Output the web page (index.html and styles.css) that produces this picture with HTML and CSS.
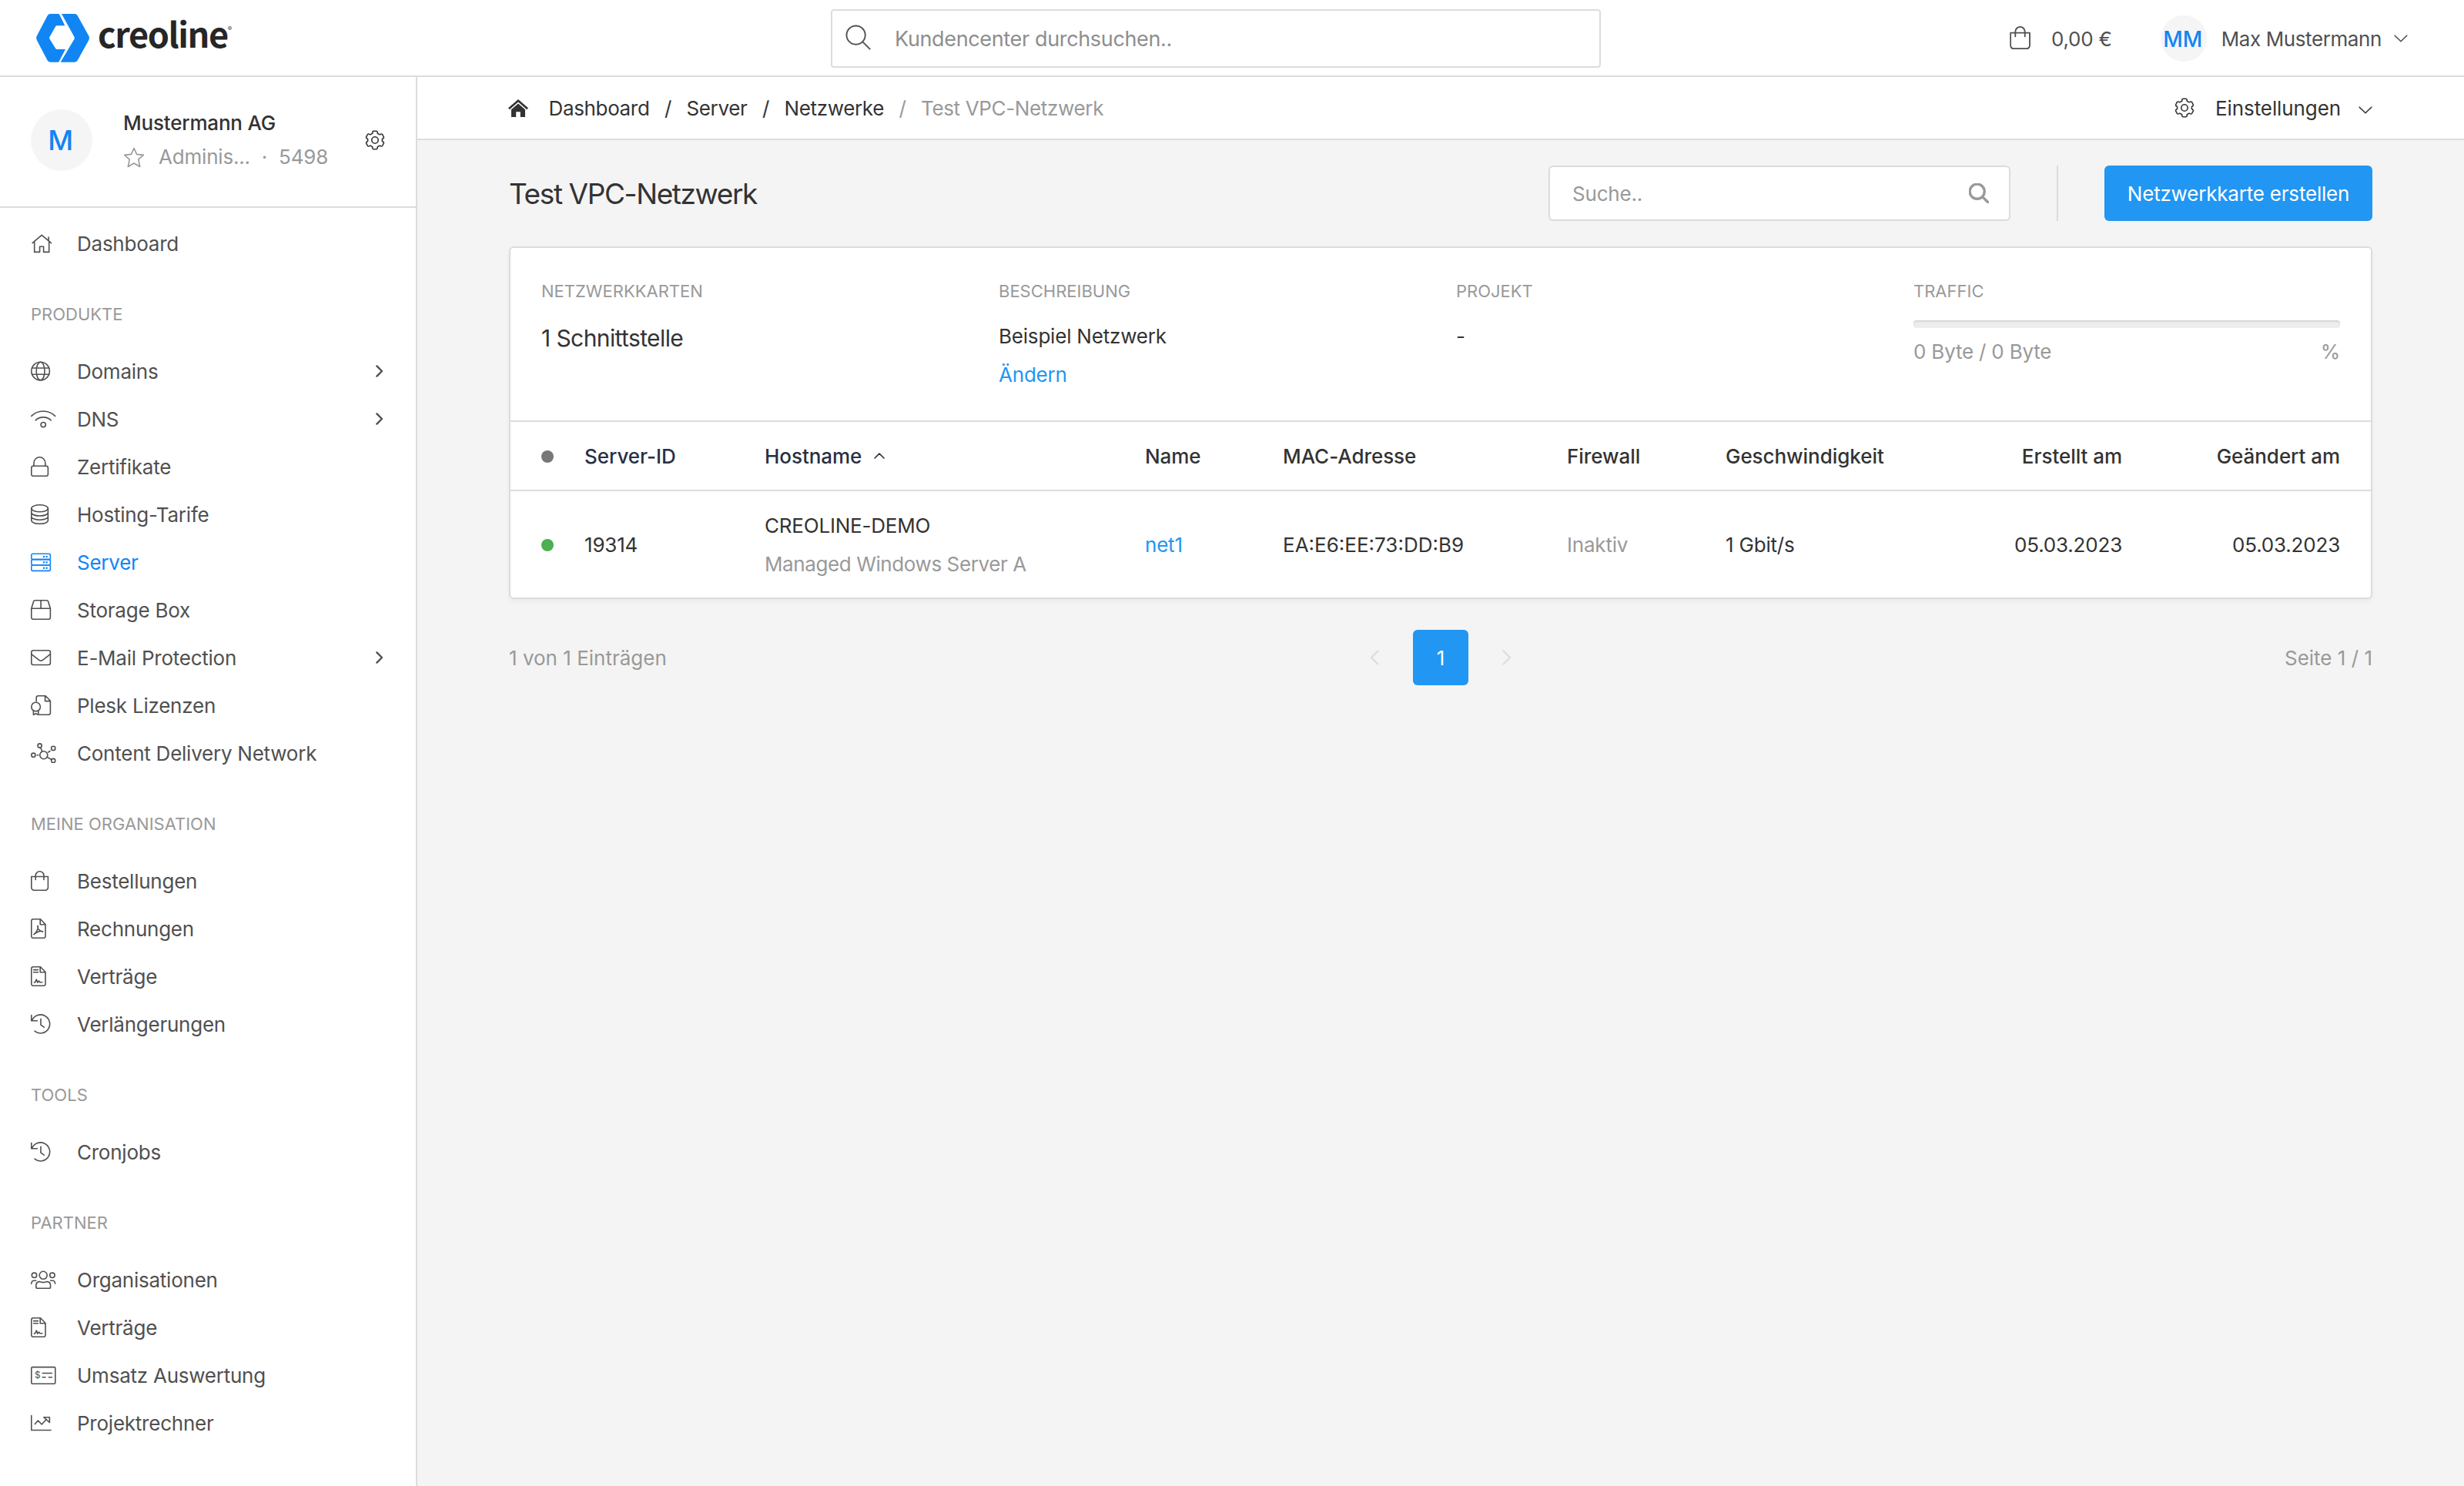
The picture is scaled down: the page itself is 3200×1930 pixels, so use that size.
FILE: index.html
```html
<!DOCTYPE html>
<html lang="de">
<head>
  <meta charset="UTF-8">
  <meta name="viewport" content="width=device-width, initial-scale=1.0">
  <title>Test VPC-Netzwerk - creoline Kundencenter</title>
  <link rel="stylesheet" href="styles.css">
</head>
<body>
  <!-- Shared icons -->
  <svg class="icon-sprite" aria-hidden="true">
    <symbol id="icon-gear" viewBox="0 0 26 26">
      <path d="M11.2 1.2h3.6q1.2 0 1.3 1.1l.2 1.9 2.9 1.7 1.7-.8q1.1-.4 1.7.6l1.7 3.1q.5 1-.4 1.7l-1.5 1.1v2.8l1.5 1.1q.9.7.4 1.7l-1.7 3.1q-.6 1-1.7.6l-1.7-.8-2.9 1.7-.2 1.9q-.1 1.1-1.3 1.1h-3.6q-1.2 0-1.3-1.1l-.2-1.9-2.9-1.7-1.7.8q-1.1.4-1.7-.6l-1.7-3.1q-.5-1 .4-1.7l1.5-1.1v-2.8l-1.5-1.1q-.9-.7-.4-1.7l1.7-3.1q.6-1 1.7-.6l1.7.8 2.9-1.7.2-1.9q.1-1.1 1.3-1.1z"/>
      <circle cx="13" cy="13" r="4.2"/>
    </symbol>
    <symbol id="icon-bag" viewBox="0 0 24 26">
      <path d="M.8 7.5h21.6v14.2a3.6 3.6 0 0 1-3.6 3.6H4.4a3.6 3.6 0 0 1-3.6-3.6z"/>
      <path d="M6.2 11.6V6.2a5.4 5.4 0 0 1 10.8 0v5.4"/>
    </symbol>
    <symbol id="icon-contract" viewBox="0 0 20 26">
      <path d="M3.2.8h9.3l6.5 6.7v15.4a2.4 2.4 0 0 1-2.4 2.4H3.2a2.4 2.4 0 0 1-2.4-2.4V3.2A2.4 2.4 0 0 1 3.2.8zM12.2 1v6.8h6.6M3.6 4.6h5.8M3.6 7.8h5.8"/>
      <path d="M4.3 21.3c1.3 0 2-1.3 2.9-4.3.9 0 .8 3 1.4 4.1.7-.5 1-2 2-2 .6 0 .4 1.7 1.3 1.7h2.9"/>
    </symbol>
    <symbol id="icon-history" viewBox="0 0 26 26">
      <path d="M.8 1.6v7.2h7.6M1.4 8.8A12 12 0 1 1 5 22.2M13 6.2v8l4.2 3"/>
    </symbol>
    <symbol id="icon-right" viewBox="0 0 10 16">
      <path d="M1.4 1.4L8 8l-6.6 6.6"/>
    </symbol>
    <symbol id="icon-down" viewBox="0 0 18 10">
      <path d="M1.2 1.2L9 8.8l7.8-7.6"/>
    </symbol>
    <symbol id="icon-search" viewBox="0 0 34 34">
      <circle cx="14" cy="14" r="12.5"/>
      <path d="M23 23l9.6 9.6"/>
    </symbol>
  </svg>

  <header class="topbar">
    <a href="#" class="logo">
      <svg class="logo-mark" viewBox="0 0 72 65">
        <path d="M19.5 1h10.3q1 0 1.4.9l7.1 14.4H28q-1.2 0-1.8 1l-7.9 14q-.5 1 0 2l7.9 12.7q.6 1 1.8 1h11L30.8 62.8q-.4.9-1.4.9h-9.9q-2.7 0-4-2.4L1.6 34.7q-1.2-2.3 0-4.7L15.5 3.4Q16.8 1 19.5 1z"/>
        <path d="M34 1h16.8q2.7 0 4 2.4L69.5 30q1.3 2.3 0 4.7L54.8 61.3q-1.3 2.4-4 2.4H32.6l17.9-30q.7-1.3 0-2.7z"/>
      </svg>
      <span class="logo-text">creoline</span><span class="logo-reg">®</span>
    </a>
    <div class="global-search">
      <svg class="icon" viewBox="0 0 34 34"><use href="#icon-search"/></svg>
      <span>Kundencenter durchsuchen..</span>
    </div>
    <div class="topbar-right">
      <svg class="icon cart-icon" viewBox="0 0 24 26"><use href="#icon-bag"/></svg>
      <span class="cart-total">0,00 €</span>
      <span class="user-avatar">MM</span>
      <span class="user-name">Max Mustermann</span>
      <svg class="icon down-icon" viewBox="0 0 18 10"><use href="#icon-down"/></svg>
    </div>
  </header>

  <div class="layout">
    <aside class="sidebar">
      <div class="org">
        <span class="org-avatar">M</span>
        <div class="org-info">
          <div class="org-name">Mustermann AG</div>
          <div class="org-meta">
            <svg class="icon star-icon" viewBox="0 0 28 27"><path d="M14 1.500l3.600 7.900 8.700 1-6.500 5.800 1.900 9.300L14 21l-7.700 4.500 1.900-9.300-6.500-5.800 8.700-1z"/></svg>
            <span class="org-role">Adminis...</span>
            <span class="org-sep">·</span>
            <span>5498</span>
          </div>
        </div>
        <svg class="icon org-gear" viewBox="0 0 26 26"><use href="#icon-gear"/></svg>
      </div>

      <nav class="nav">
        <a href="#" class="nav-item">
          <svg class="icon" viewBox="-1.5 0 34 26"><path d="M.6 12.6L12.7 2.400 25 12.600M3.200 10.800v13.600h6.900v-7.200h5v7.200h7.100V10.600M21.600 9.600V5"/></svg>
          <span>Dashboard</span>
        </a>

        <h2 class="nav-heading">Produkte</h2>
        <a href="#" class="nav-item">
          <svg class="icon" viewBox="0 0 34 26"><circle cx="12.6" cy="13" r="11.8"/><ellipse cx="12.6" cy="13" rx="5.4" ry="11.8"/><path d="M1.6 9h22M1.6 17.2h22"/></svg>
          <span>Domains</span>
          <svg class="icon right-icon" viewBox="0 0 10 16"><use href="#icon-right"/></svg>
        </a>
        <a href="#" class="nav-item">
          <svg class="icon" viewBox="0 0 34 26"><path d="M.8 9.400c8.600-8.600 22.200-8.600 30.800 0M6.200 14.800c5.600-5.200 14.400-5.200 20 0"/><circle cx="16.2" cy="20.6" r="3.1"/></svg>
          <span>DNS</span>
          <svg class="icon right-icon" viewBox="0 0 10 16"><use href="#icon-right"/></svg>
        </a>
        <a href="#" class="nav-item">
          <svg class="icon" viewBox="0 0 34 26"><rect x=".8" y="12.3" width="21.6" height="13" rx="2.4"/><path d="M4 12.300V8.200a7.400 7.400 0 0 1 14.800 0v4.100"/></svg>
          <span>Zertifikate</span>
        </a>
        <a href="#" class="nav-item">
          <svg class="icon" viewBox="0 0 34 26"><ellipse cx="11.6" cy="5.3" rx="10.8" ry="4.5"/><path d="M.8 5.300v15.500c0 6 21.600 6 21.600 0V5.300M.8 10.500c0 6 21.600 6 21.600 0M.8 15.700c0 6 21.600 6 21.600 0"/></svg>
          <span>Hosting-Tarife</span>
        </a>
        <a href="#" class="nav-item active">
          <svg class="icon" viewBox="0 0 34 26"><rect x=".8" y="2.2" width="24.6" height="7.4" rx="2"/><rect x=".8" y="9.6" width="24.6" height="7.4" rx="2"/><rect x=".8" y="17" width="24.6" height="7.4" rx="2"/><path class="dots" d="M17 6h.1M20.6 6h.1M17 13.3h.1M20.6 13.3h.1M17 20.7h.1M20.6 20.7h.1"/></svg>
          <span>Server</span>
        </a>
        <a href="#" class="nav-item">
          <svg class="icon" viewBox="0 0 34 26"><path d="M.8 11.300v11.600a2.400 2.400 0 0 0 2.400 2.400H23a2.400 2.400 0 0 0 2.400-2.400V11.300zM.8 11.300l2.700-8.900Q4 .8 5.600.8h15q1.600 0 2.100 1.600l2.700 8.900M13.100.8v10.500"/></svg>
          <span>Storage Box</span>
        </a>
        <a href="#" class="nav-item">
          <svg class="icon" viewBox="0 0 34 26"><rect x=".8" y="3.7" width="24.6" height="18.8" rx="2.4"/><path d="M.8 8.600l10 7.700q2.300 1.700 4.600 0l10-7.700"/></svg>
          <span>E-Mail Protection</span>
          <svg class="icon right-icon" viewBox="0 0 10 16"><use href="#icon-right"/></svg>
        </a>
        <a href="#" class="nav-item">
          <svg class="icon" viewBox="0 0 34 26"><path d="M7.200 8V3.200A2.400 2.400 0 0 1 9.600.8h9.500l6.300 6.400v15.700a2.400 2.400 0 0 1-2.400 2.400H11M18.600 1v6.600h6.600"/><circle cx="6.6" cy="15" r="5.8"/><path d="M3.400 20v5.300l3.200-1.600 3.200 1.600V20"/></svg>
          <span>Plesk Lizenzen</span>
        </a>
        <a href="#" class="nav-item">
          <svg class="icon" viewBox="0 0 34 26"><circle cx="16.8" cy="15.7" r="5"/><circle cx="11.6" cy="3.5" r="2.6"/><circle cx="29.2" cy="6.9" r="2.6"/><circle cx="29.2" cy="23" r="2.6"/><circle cx="3.4" cy="15.7" r="2.6"/><path d="M12.7 6l2.1 4.9M21.2 18.4l5.7 3.1M8.2 15.7h1.6M22.8 12l2.2-1.6"/></svg>
          <span>Content Delivery Network</span>
        </a>

        <h2 class="nav-heading">Meine Organisation</h2>
        <a href="#" class="nav-item">
          <svg class="icon bag-icon" viewBox="0 0 24 26"><use href="#icon-bag"/></svg>
          <span>Bestellungen</span>
        </a>
        <a href="#" class="nav-item">
          <svg class="icon" viewBox="0 0 34 26"><path d="M3.200.8h9.300l6.500 6.700v15.400a2.400 2.400 0 0 1-2.400 2.400H3.200a2.400 2.400 0 0 1-2.400-2.400V3.200A2.400 2.400 0 0 1 3.200.8zM12.200 1v6.800h6.600"/><path d="M4 20.600c2.600-1.200 6.200-7.600 5.200-11.300-1.200 2.600 2.200 8.200 6.400 7.600-2-1.600-8.600.4-11.600 3.700z"/></svg>
          <span>Rechnungen</span>
        </a>
        <a href="#" class="nav-item">
          <svg class="icon page-icon" viewBox="0 0 20 26"><use href="#icon-contract"/></svg>
          <span>Verträge</span>
        </a>
        <a href="#" class="nav-item">
          <svg class="icon history-icon" viewBox="0 0 26 26"><use href="#icon-history"/></svg>
          <span>Verlängerungen</span>
        </a>

        <h2 class="nav-heading">Tools</h2>
        <a href="#" class="nav-item">
          <svg class="icon history-icon" viewBox="0 0 26 26"><use href="#icon-history"/></svg>
          <span>Cronjobs</span>
        </a>

        <h2 class="nav-heading">Partner</h2>
        <a href="#" class="nav-item">
          <svg class="icon" viewBox="0 0 34 26"><circle cx="16.2" cy="7.3" r="5"/><circle cx="4.5" cy="7.3" r="3.2"/><circle cx="27.9" cy="7.3" r="3.2"/><path d="M11.4 15.6q4.8 2 9.6 0 4.6.2 4.6 5.2v1.6q0 1.9-2 1.9H8.8q-2 0-2-1.9v-1.6q0-5 4.6-5.200zM.8 18.300q.2-4 3.400-4h2.600M31.600 18.300q-.2-4-3.400-4h-2.600"/></svg>
          <span>Organisationen</span>
        </a>
        <a href="#" class="nav-item">
          <svg class="icon page-icon" viewBox="0 0 20 26"><use href="#icon-contract"/></svg>
          <span>Verträge</span>
        </a>
        <a href="#" class="nav-item">
          <svg class="icon" viewBox="0 0 34 26"><rect x=".8" y="2.6" width="31" height="21.6" rx="1.4"/><text x="5" y="17.2" class="dollar">$</text><path d="M15.2 10.5h12.2M15.2 15.8h3.8M23.4 15.8h4"/></svg>
          <span>Umsatz Auswertung</span>
        </a>
        <a href="#" class="nav-item">
          <svg class="icon" viewBox="0 0 34 26"><path d="M.8 3.600v18.900h25.200M5.400 14.600l4-4.600 4.800 5 5.800-6.200M16.800 5.700h7.600v6.800z"/></svg>
          <span>Projektrechner</span>
        </a>
      </nav>
    </aside>

    <main class="main">
      <div class="crumb-bar">
        <svg class="home-icon" viewBox="0 0 26 23"><path d="M13 0L26 11.200l-1.800 2L13 3.600 1.800 13.200 0 11.200z"/><path d="M13 5.400l9 7.800V23h-6.200v-6.800h-5.600V23H4v-9.800z"/></svg>
        <a href="#">Dashboard</a>
        <span>/</span>
        <a href="#">Server</a>
        <span>/</span>
        <a href="#">Netzwerke</a>
        <span class="muted">/</span>
        <span class="muted">Test VPC-Netzwerk</span>
        <div class="settings">
          <svg class="icon settings-gear" viewBox="0 0 26 26"><use href="#icon-gear"/></svg>
          <span>Einstellungen</span>
          <svg class="icon down-icon" viewBox="0 0 18 10"><use href="#icon-down"/></svg>
        </div>
      </div>

      <div class="content">
        <div class="page-head">
          <h1>Test VPC-Netzwerk</h1>
          <div class="table-search">
            <span>Suche..</span>
            <svg class="icon" viewBox="0 0 34 34"><use href="#icon-search"/></svg>
          </div>
          <div class="divider"></div>
          <button type="button" class="create-button">Netzwerkkarte erstellen</button>
        </div>

        <section class="card">
          <div class="summary">
            <div>
              <h3>Netzwerkkarten</h3>
              <p class="count">1 Schnittstelle</p>
            </div>
            <div>
              <h3>Beschreibung</h3>
              <p>Beispiel Netzwerk</p>
              <p><a href="#" class="link">Ändern</a></p>
            </div>
            <div>
              <h3>Projekt</h3>
              <p>-</p>
            </div>
            <div>
              <h3>Traffic</h3>
              <div class="progress"></div>
              <div class="usage"><span>0 Byte / 0 Byte</span><span>%</span></div>
            </div>
          </div>

          <table class="interfaces">
            <thead>
              <tr>
                <th class="col-status"><span class="dot"></span></th>
                <th class="col-id sortable">Server-ID</th>
                <th class="col-host sortable">Hostname <svg class="icon sort-icon" viewBox="0 0 14 8"><path d="M1 7l6-5.800L13 7"/></svg></th>
                <th class="col-name">Name</th>
                <th class="col-mac">MAC-Adresse</th>
                <th class="col-firewall">Firewall</th>
                <th class="col-speed">Geschwindigkeit</th>
                <th class="col-created">Erstellt am</th>
                <th class="col-changed">Geändert am</th>
              </tr>
            </thead>
            <tbody>
              <tr>
                <td class="col-status"><span class="dot online"></span></td>
                <td>19314</td>
                <td><div>CREOLINE-DEMO</div><div class="muted product">Managed Windows Server A</div></td>
                <td><a href="#" class="link">net1</a></td>
                <td class="mac">EA:E6:EE:73:DD:B9</td>
                <td class="muted">Inaktiv</td>
                <td>1 Gbit/s</td>
                <td class="col-created">05.03.2023</td>
                <td class="col-changed">05.03.2023</td>
              </tr>
            </tbody>
          </table>
        </section>

        <div class="pagination">
          <span>1 von 1 Einträgen</span>
          <div class="pages">
            <svg class="icon" viewBox="0 0 12 20"><path d="M10.5 1.5L2 10l8.5 8.5"/></svg>
            <span class="page-current">1</span>
            <svg class="icon" viewBox="0 0 12 20"><path d="M1.5 1.5L10 10l-8.5 8.5"/></svg>
          </div>
          <span class="page-info">Seite 1 / 1</span>
        </div>
      </div>
    </main>
  </div>
</body>
</html>
```
FILE: styles.css
```css
:root {
  --primary: #2196f3;
  --brand: #1285f5;
  --text: #333;
  --nav-text: #505050;
  --muted: #999;
  --border: #dcdcdc;
  --background: #f4f4f4;
}

* {
  box-sizing: border-box;
}

body {
  margin: 0;
  height: 1930px;
  overflow: hidden;
  font-family: Inter, "Open Sans", sans-serif;
  font-size: 26px;
  line-height: 50px;
  letter-spacing: -0.2px;
  color: var(--text);
  background: #fff;
}

a {
  color: inherit;
  text-decoration: none;
}

h1, h2, h3, p {
  margin: 0;
  font-weight: 400;
}

.icon {
  flex: none;
  fill: none;
  stroke: currentColor;
  stroke-width: 1.6;
  stroke-linecap: round;
  stroke-linejoin: round;
}

.icon-sprite {
  display: none;
}

.muted {
  color: var(--muted);
}

.link {
  color: var(--primary);
}

/* Top bar */
.topbar {
  display: grid;
  grid-template-columns: 1079px 1000px 1fr;
  align-items: center;
  height: 100px;
  padding-top: 1px;
  border-bottom: 2px solid var(--border);
  color: var(--nav-text);
}

.logo {
  display: flex;
  align-items: center;
  padding-left: 46px;
  color: #262626;
}

.logo-mark {
  width: 72px;
  height: 65px;
  fill: var(--brand);
}

.logo-text {
  margin-left: 9px;
  padding-bottom: 13px;
  font-family: "Noto Sans CJK SC", sans-serif;
  font-size: 45px;
  font-weight: 700;
  letter-spacing: -1.4px;
}

.logo-reg {
  font-size: 8px;
  line-height: 40px;
  align-self: flex-start;
}

.global-search {
  display: flex;
  align-items: center;
  height: 76px;
  padding-left: 17px;
  border: 2px solid var(--border);
  border-radius: 4px;
  font-size: 27px;
  letter-spacing: -0.35px;
  color: #8e8e8e;
}

.global-search .icon {
  width: 33px;
  height: 33px;
  margin: 0 31px 3px 0;
  stroke-width: 2;
  color: #555;
}

.global-search span,
.topbar-right > span,
.nav-item span,
.table-search span,
.pagination > span {
  padding-top: 2px;
}

.topbar-right {
  display: flex;
  align-items: center;
  justify-content: flex-end;
  padding-right: 73px;
}

.cart-icon {
  width: 28px;
  height: 30px;
  margin-bottom: 2px;
}

.cart-total {
  margin: 0 63px 0 26px;
}

.user-avatar {
  width: 60px;
  height: 60px;
  border-radius: 50%;
  background: #f5f5f5;
  color: var(--brand);
  font-size: 28px;
  font-weight: 500;
  line-height: 58px;
  text-align: center;
  text-indent: -2px;
}

.user-name {
  margin: 0 16px 0 19px;
  letter-spacing: -0.4px;
}

.down-icon {
  width: 18px;
  height: 10px;
}

/* Sidebar */
.layout {
  display: flex;
  height: 1830px;
}

.sidebar {
  flex: none;
  width: 542px;
  border-right: 2px solid var(--border);
}

.org {
  display: flex;
  align-items: center;
  height: 170px;
  padding: 0 40px 4px;
  border-bottom: 2px solid var(--border);
}

.org-avatar {
  width: 80px;
  height: 80px;
  margin-right: 40px;
  border-radius: 50%;
  background: #f5f5f5;
  color: var(--brand);
  font-size: 36px;
  font-weight: 500;
  line-height: 80px;
  text-align: center;
  text-indent: -3px;
}

.org-info {
  flex: 1;
  line-height: 44px;
}

.org-name {
  font-weight: 500;
}

.org-meta {
  display: flex;
  align-items: center;
  color: var(--muted);
}

.star-icon {
  width: 28px;
  height: 27px;
  margin-right: 18px;
}

.org-sep {
  margin: 0 15px;
}

.org-gear {
  width: 26px;
  height: 26px;
}

.nav {
  padding-top: 15px;
  letter-spacing: -0.24px;
  color: var(--nav-text);
}

.nav-heading {
  height: 104px;
  padding: 9px 40px 0;
  font-size: 22px;
  line-height: 104px;
  letter-spacing: 0;
  text-transform: uppercase;
  color: var(--muted);
}

.nav-item {
  display: flex;
  align-items: center;
  height: 62px;
  padding: 0 42px 0 40px;
}

.nav-item .icon:first-child {
  width: 34px;
  height: 26px;
  margin-right: 26px;
}

.nav-item .bag-icon:first-child {
  width: 24px;
  margin-right: 36px;
}

.nav-item .page-icon:first-child {
  width: 20px;
  margin-right: 40px;
}

.nav-item .history-icon:first-child {
  width: 26px;
  margin-right: 34px;
}

.nav-item .right-icon {
  width: 10px;
  height: 16px;
  margin-left: auto;
  stroke-width: 2.4;
}

.nav-item.active {
  color: var(--brand);
}

.dots {
  stroke-width: 2.4;
}

.dollar {
  fill: currentColor;
  stroke: none;
  font-size: 12px;
}

/* Main area */
.main {
  flex: 1;
  background: var(--background);
}

.crumb-bar {
  display: flex;
  align-items: center;
  gap: 19.5px;
  height: 82px;
  padding: 2px 119px 0 118px;
  border-bottom: 2px solid var(--border);
  background: #fff;
  letter-spacing: -0.35px;
}

.home-icon {
  width: 26px;
  height: 23px;
  margin: 0 7px 2px 0;
  fill: var(--text);
}

.settings {
  display: flex;
  align-items: center;
  margin-left: auto;
  letter-spacing: -0.1px;
}

.settings-gear {
  width: 26px;
  height: 26px;
  margin: 0 27px 2px 0;
}

.settings .down-icon {
  margin: 4px 0 0 23px;
}

.content {
  padding: 33px 119px 0;
}

.page-head {
  display: flex;
  align-items: center;
  height: 72px;
  margin-bottom: 33px;
}

h1 {
  flex: 1;
  padding-top: 2px;
  font-size: 37px;
  letter-spacing: -1.4px;
}

.table-search {
  display: flex;
  align-items: center;
  justify-content: space-between;
  width: 600px;
  height: 72px;
  padding: 0 26px 0 29px;
  border: 2px solid var(--border);
  border-radius: 6px;
  background: #fff;
  color: var(--muted);
}

.table-search .icon {
  width: 26px;
  height: 26px;
  stroke-width: 4.4;
}

.divider {
  width: 2px;
  height: 72px;
  margin: 0 60px;
  background: var(--border);
}

.create-button {
  width: 348px;
  height: 72px;
  padding: 2px 0 0;
  border: none;
  border-radius: 6px;
  background: var(--primary);
  color: #fff;
  font: inherit;
  letter-spacing: inherit;
}

.card {
  border: 2px solid var(--border);
  border-radius: 6px;
  background: #fff;
  box-shadow: 0 4px 6px rgba(0, 0, 0, 0.04);
}

.summary {
  display: grid;
  grid-template-columns: repeat(4, 1fr);
  gap: 40px;
  height: 224px;
  padding: 31px 40px 0;
}

.summary h3 {
  font-size: 22px;
  letter-spacing: 0;
  text-transform: uppercase;
  color: var(--muted);
}

.summary h3 + p {
  margin-top: 9px;
}

.summary .count {
  padding-top: 2px;
  font-size: 30px;
  letter-spacing: -0.6px;
}

.progress {
  height: 10px;
  margin: 13px 0 6px;
  border-radius: 4px;
  background: #ededed;
  box-shadow: inset 0 2px 2px rgba(0, 0, 0, 0.1);
}

.usage {
  display: flex;
  justify-content: space-between;
  color: var(--muted);
}

/* Interface table */
.interfaces {
  width: 100%;
  table-layout: fixed;
  border-collapse: collapse;
}

.interfaces tr {
  height: 90px;
  border-top: 2px solid var(--border);
}

.interfaces tbody tr {
  height: 139px;
}

.interfaces th,
.interfaces td {
  padding: 2px 0 0;
  text-align: left;
  white-space: nowrap;
}

.interfaces th {
  font-weight: 500;
  letter-spacing: -0.05px;
}

.interfaces .sortable {
  color: #283044;
}

.interfaces .product {
  letter-spacing: -0.4px;
}

.interfaces .mac {
  letter-spacing: 0;
}

.interfaces .col-status { width: 96px; padding-left: 40px; }
.col-id { width: 234px; }
.col-host { width: 494px; }
.col-name { width: 179px; }
.col-mac { width: 369px; }
.col-firewall { width: 206px; }
.col-speed { width: 259px; }
.interfaces .col-created { width: 256px; text-align: right; }
.interfaces .col-changed { width: 323px; padding-right: 40px; text-align: right; }

.dot {
  display: block;
  width: 16px;
  height: 16px;
  border-radius: 50%;
  background: #777;
}

.dot.online {
  background: #4caf50;
}

.sort-icon {
  width: 14px;
  height: 8px;
  margin: 0 0 6px 9px;
}

/* Pagination */
.pagination {
  display: grid;
  grid-template-columns: 1fr auto 1fr;
  align-items: center;
  margin-top: 40px;
  letter-spacing: 0;
  color: var(--muted);
}

.pages {
  display: flex;
  align-items: center;
  gap: 44px;
}

.pages .icon {
  width: 12px;
  height: 20px;
  color: #ddd;
  stroke-width: 2.4;
}

.page-current {
  width: 72px;
  height: 72px;
  padding-top: 1px;
  border-radius: 6px;
  background: var(--primary);
  color: #fff;
  line-height: 72px;
  text-align: center;
}

.page-info {
  text-align: right;
}
```
